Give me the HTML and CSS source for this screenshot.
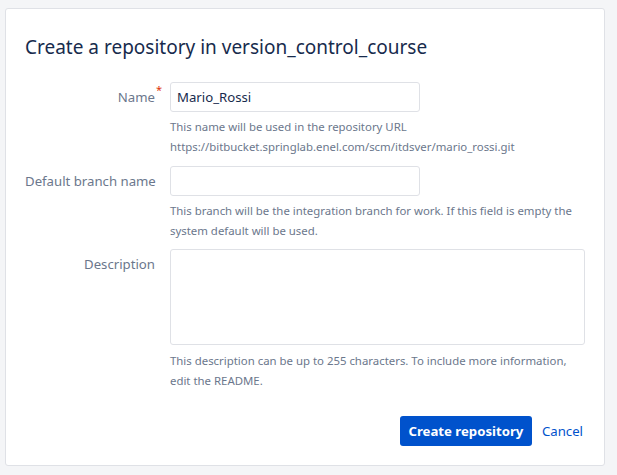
FILE: index.html
```html
<!DOCTYPE html>
<html lang="en">
<head>
<meta charset="utf-8">
<title>Create a repository</title>
<link rel="stylesheet" href="styles.css">
</head>
<body>
<div class="card">
  <h2 class="title">Create a repository in version_control_course</h2>
  <form class="form">
    <div class="row">
      <label class="label" for="name">Name<span class="req">*</span></label>
      <div class="field">
        <input id="name" class="input" type="text" value="Mario_Rossi">
        <div class="help">This name will be used in the repository URL<br>https://bitbucket.springlab.enel.com/scm/itdsver/mario_rossi.git</div>
      </div>
    </div>
    <div class="row">
      <label class="label" for="branch">Default branch name</label>
      <div class="field">
        <input id="branch" class="input" type="text">
        <div class="help">This branch will be the integration branch for work. If this field is empty the<br>system default will be used.</div>
      </div>
    </div>
    <div class="row">
      <label class="label" for="desc">Description</label>
      <div class="field">
        <textarea id="desc" class="textarea"></textarea>
        <div class="help">This description can be up to 255 characters. To include more information,<br>edit the README.</div>
      </div>
    </div>
    <div class="actions">
      <button type="button" class="btn">Create repository</button>
      <a class="cancel" href="#">Cancel</a>
    </div>
  </form>
</div>
</body>
</html>
```

FILE: styles.css
```css
* { box-sizing: border-box; }
html, body { margin: 0; padding: 0; }
body {
  background: #f4f5f7;
  font-family: "Noto Sans", "Open Sans", sans-serif;
  color: #172b4d;
  padding: 8px 12px 9px 5px;
}
.card {
  background: #fff;
  border: 1px solid #dfe1e6;
  border-radius: 3px;
  width: 600px;
  height: 458px;
  padding: 24px 20px 19px 19px;
}
.title {
  margin: 0 0 21px 0;
  font-size: 19px;
  font-weight: 400;
  line-height: 28px;
  color: #172b4d;
}
.row {
  display: grid;
  grid-template-columns: 130px 1fr;
  column-gap: 15px;
  margin-bottom: 9px;
}
.row:nth-child(2) { margin-bottom: 8px; }
.label {
  position: relative;
  text-align: right;
  font-size: 13.2px;
  line-height: 30px;
  color: #6b778c;
  white-space: nowrap;
}
.req {
  position: absolute;
  top: -7px;
  left: 100%;
  margin-left: 1px;
  color: #de350b;
  font-size: 11px;
}
.input, .textarea {
  display: block;
  border: 1px solid #dfe1e6;
  border-radius: 3px;
  font: inherit;
  font-size: 13.2px;
  color: #172b4d;
  background: #fff;
  margin: 0;
}
.input { width: 250px; height: 30px; padding: 0 6px; }
.textarea { width: 415px; height: 96px; resize: none; }
.help {
  margin-top: 5px;
  font-size: 11.4px;
  line-height: 20px;
  color: #6b778c;
  white-space: nowrap;
}
.textarea + .help { margin-top: 6px; }
.actions {
  display: flex;
  justify-content: flex-end;
  align-items: center;
  gap: 10px;
  margin-top: 25px;
  padding-right: 1px;
}
.btn {
  background: #0052cc;
  color: #fff;
  border: 0;
  border-radius: 3px;
  height: 30px;
  width: 132px;
  font: inherit;
  font-size: 13.2px;
  font-weight: 700;
  padding: 0;
}
.cancel { color: #0052cc; font-size: 13.2px; text-decoration: none; }
```
